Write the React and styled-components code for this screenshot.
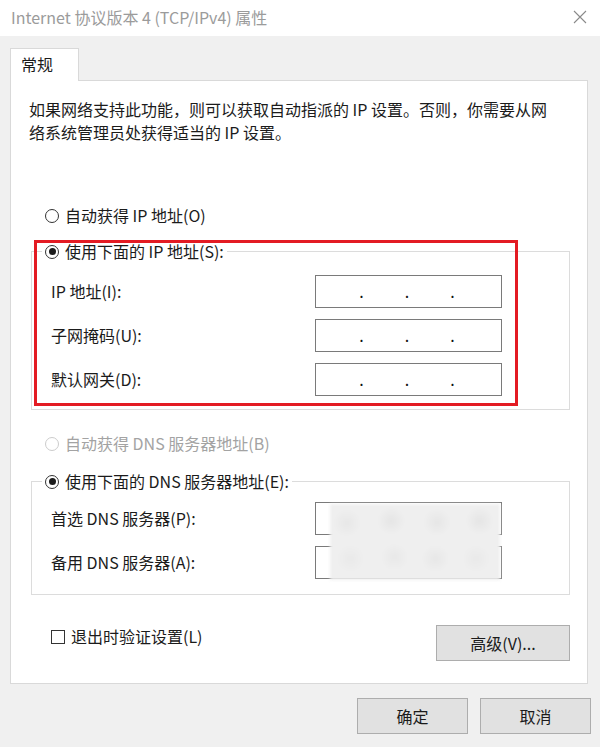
import React from "react";
import styled, { createGlobalStyle } from "styled-components";

const Global = createGlobalStyle`
  html, body { margin: 0; padding: 0; background: #f0f0f0; }
  body { font-family: "Noto Sans CJK SC", "Noto Sans", sans-serif; color: #1b1b1b; }
  * { box-sizing: border-box; }
`;

const Window = styled.div`
  width: 600px;
  height: 747px;
  background: #f0f0f0;
  display: flex;
  flex-direction: column;
  overflow: hidden;
`;

const TitleBar = styled.div`
  height: 36px;
  flex-shrink: 0;
  background: #fff;
  display: flex;
  align-items: center;
  justify-content: space-between;
  padding: 0 13px 2px 11px;
`;

const Title = styled.div`
  font-size: 16px;
  line-height: 20px;
  color: #9b9b9b;
  white-space: nowrap;
`;

const CloseIcon = styled.svg`
  width: 14px;
  height: 14px;
  display: block;
`;

const Body = styled.div`
  display: flex;
  flex-direction: column;
  padding: 12px 12px 0 10px;
`;

const TabStrip = styled.div`
  display: flex;
`;

const Tab = styled.div`
  position: relative;
  z-index: 1;
  height: 33px;
  margin-bottom: -1px;
  padding: 0 25px 0 10px;
  line-height: 30px;
  font-size: 16px;
  background: #fff;
  border: 1px solid #d9d9d9;
  border-bottom: none;
`;

const Panel = styled.div`
  position: relative;
  display: flex;
  flex-direction: column;
  background: #fff;
  border: 1px solid #d9d9d9;
  padding: 17px 17px 22px 18px;
`;

const Intro = styled.p`
  margin: 0;
  font-size: 16px;
  line-height: 23px;
  white-space: nowrap;
`;

const RadioRow = styled.label`
  display: flex;
  align-items: center;
  gap: 6px;
  font-size: 16px;
  line-height: 23px;
  white-space: nowrap;
  color: ${(p) => (p.$disabled ? "#a3a3a3" : "#1b1b1b")};
  margin-top: ${(p) => p.$mt || 0}px;
  padding-left: ${(p) => p.$indent || 0}px;
`;

const RadioDot = styled.span`
  width: 14px;
  height: 14px;
  flex-shrink: 0;
  border-radius: 50%;
  border: 1px solid ${(p) => (p.$disabled ? "#cccccc" : "#333")};
  background: #fff;
  display: flex;
  align-items: center;
  justify-content: center;
  &::after {
    content: "";
    width: 7px;
    height: 7px;
    border-radius: 50%;
    background: ${(p) => (p.$checked ? "#1b1b1b" : "transparent")};
  }
`;

const Group = styled.fieldset`
  position: relative;
  margin: ${(p) => p.$mt || 0}px 0 0 2px;
  padding: 0;
  border: 1px solid #dcdcdc;
  min-inline-size: 0;
`;

const Legend = styled.legend`
  margin-left: 10px;
  padding: 0 3px;
`;

const FieldGrid = styled.div`
  position: relative;
  display: grid;
  grid-template-columns: 1fr 187px;
  align-items: center;
  row-gap: 11px;
  padding: ${(p) => p.$pt}px 67px ${(p) => p.$pb}px 19px;
`;

const FieldLabel = styled.span`
  font-size: 16px;
  line-height: 23px;
  white-space: nowrap;
`;

const IpBox = styled.div`
  height: 33px;
  background: #fff;
  border: 1px solid #7a7a7a;
  display: flex;
  align-items: center;
  justify-content: center;
  gap: 41px;
  padding: 0 3px 1px 0;
  font-size: 16px;
  line-height: 16px;
  color: #111;
`;

const Redaction = styled.div`
  position: absolute;
  left: 298px;
  top: 11px;
  width: 170px;
  height: 76px;
  background:
    radial-gradient(circle at 10% 25%, #e7e7e7 0, transparent 14px),
    radial-gradient(circle at 36% 22%, #e5e5e5 0, transparent 14px),
    radial-gradient(circle at 63% 24%, #e6e6e6 0, transparent 14px),
    radial-gradient(circle at 88% 22%, #e5e5e5 0, transparent 14px),
    radial-gradient(circle at 12% 72%, #e9e9e9 0, transparent 14px),
    radial-gradient(circle at 38% 70%, #e8e8e8 0, transparent 14px),
    radial-gradient(circle at 62% 72%, #e7e7e7 0, transparent 14px),
    radial-gradient(circle at 86% 72%, #e9e9e9 0, transparent 14px),
    #efefef;
  filter: blur(1.5px);
`;

const Highlight = styled.div`
  position: absolute;
  left: 23px;
  top: 159px;
  width: 484px;
  height: 166px;
  border: 3px solid #e31b23;
  pointer-events: none;
`;

const BottomRow = styled.div`
  display: flex;
  justify-content: space-between;
  align-items: flex-start;
  margin-top: 30px;
  padding-left: 22px;
`;

const CheckRow = styled.label`
  display: flex;
  align-items: center;
  gap: 6px;
  font-size: 16px;
  line-height: 23px;
  white-space: nowrap;
`;

const CheckBox = styled.span`
  width: 14px;
  height: 14px;
  border: 1px solid #333;
  background: #fff;
`;

const Button = styled.button`
  width: ${(p) => p.$w}px;
  height: 36px;
  padding: 0;
  background: #e1e1e1;
  border: 1px solid #adadad;
  font-family: inherit;
  font-size: 16px;
  line-height: 20px;
  color: #1b1b1b;
`;

const Footer = styled.div`
  display: flex;
  justify-content: flex-end;
  gap: 12px;
  margin: 14px -3px 0 0;
`;

function Radio({ checked, disabled, children, ...rest }) {
  return (
    <RadioRow $disabled={disabled} {...rest}>
      <RadioDot $checked={checked} $disabled={disabled} />
      {children}
    </RadioRow>
  );
}

function IpInput({ dots = true }) {
  return (
    <IpBox>
      {dots && (
        <>
          <span>.</span>
          <span>.</span>
          <span>.</span>
        </>
      )}
    </IpBox>
  );
}

export default function App() {
  return (
    <>
      <Global />
      <Window>
        <TitleBar>
          <Title>Internet 协议版本 4 (TCP/IPv4) 属性</Title>
          <CloseIcon viewBox="0 0 14 14">
            <path d="M1 1 L13 13 M13 1 L1 13" stroke="#8a8a8a" strokeWidth="1.1" fill="none" />
          </CloseIcon>
        </TitleBar>
        <Body>
          <TabStrip>
            <Tab>常规</Tab>
          </TabStrip>
          <Panel>
            <Intro>
              如果网络支持此功能，则可以获取自动指派的 IP 设置。否则，你需要从网
              <br />
              络系统管理员处获得适当的 IP 设置。
            </Intro>

            <Radio $mt={60} $indent={16}>自动获得 IP 地址(O)</Radio>

            <Group $mt={13}>
              <Legend>
                <Radio checked>使用下面的 IP 地址(S):</Radio>
              </Legend>
              <FieldGrid $pt={12} $pb={13}>
                <FieldLabel>IP 地址(I):</FieldLabel>
                <IpInput />
                <FieldLabel>子网掩码(U):</FieldLabel>
                <IpInput />
                <FieldLabel>默认网关(D):</FieldLabel>
                <IpInput />
              </FieldGrid>
            </Group>

            <Radio disabled $mt={22} $indent={16}>自动获得 DNS 服务器地址(B)</Radio>

            <Group $mt={15}>
              <Legend>
                <Radio checked>使用下面的 DNS 服务器地址(E):</Radio>
              </Legend>
              <FieldGrid $pt={9} $pb={15}>
                <FieldLabel>首选 DNS 服务器(P):</FieldLabel>
                <IpInput dots={false} />
                <FieldLabel>备用 DNS 服务器(A):</FieldLabel>
                <IpInput dots={false} />
                <Redaction />
              </FieldGrid>
            </Group>

            <BottomRow>
              <CheckRow>
                <CheckBox />
                退出时验证设置(L)
              </CheckRow>
              <Button $w={134}>高级(V)...</Button>
            </BottomRow>

            <Highlight />
          </Panel>
          <Footer>
            <Button $w={111}>确定</Button>
            <Button $w={111}>取消</Button>
          </Footer>
        </Body>
      </Window>
    </>
  );
}
